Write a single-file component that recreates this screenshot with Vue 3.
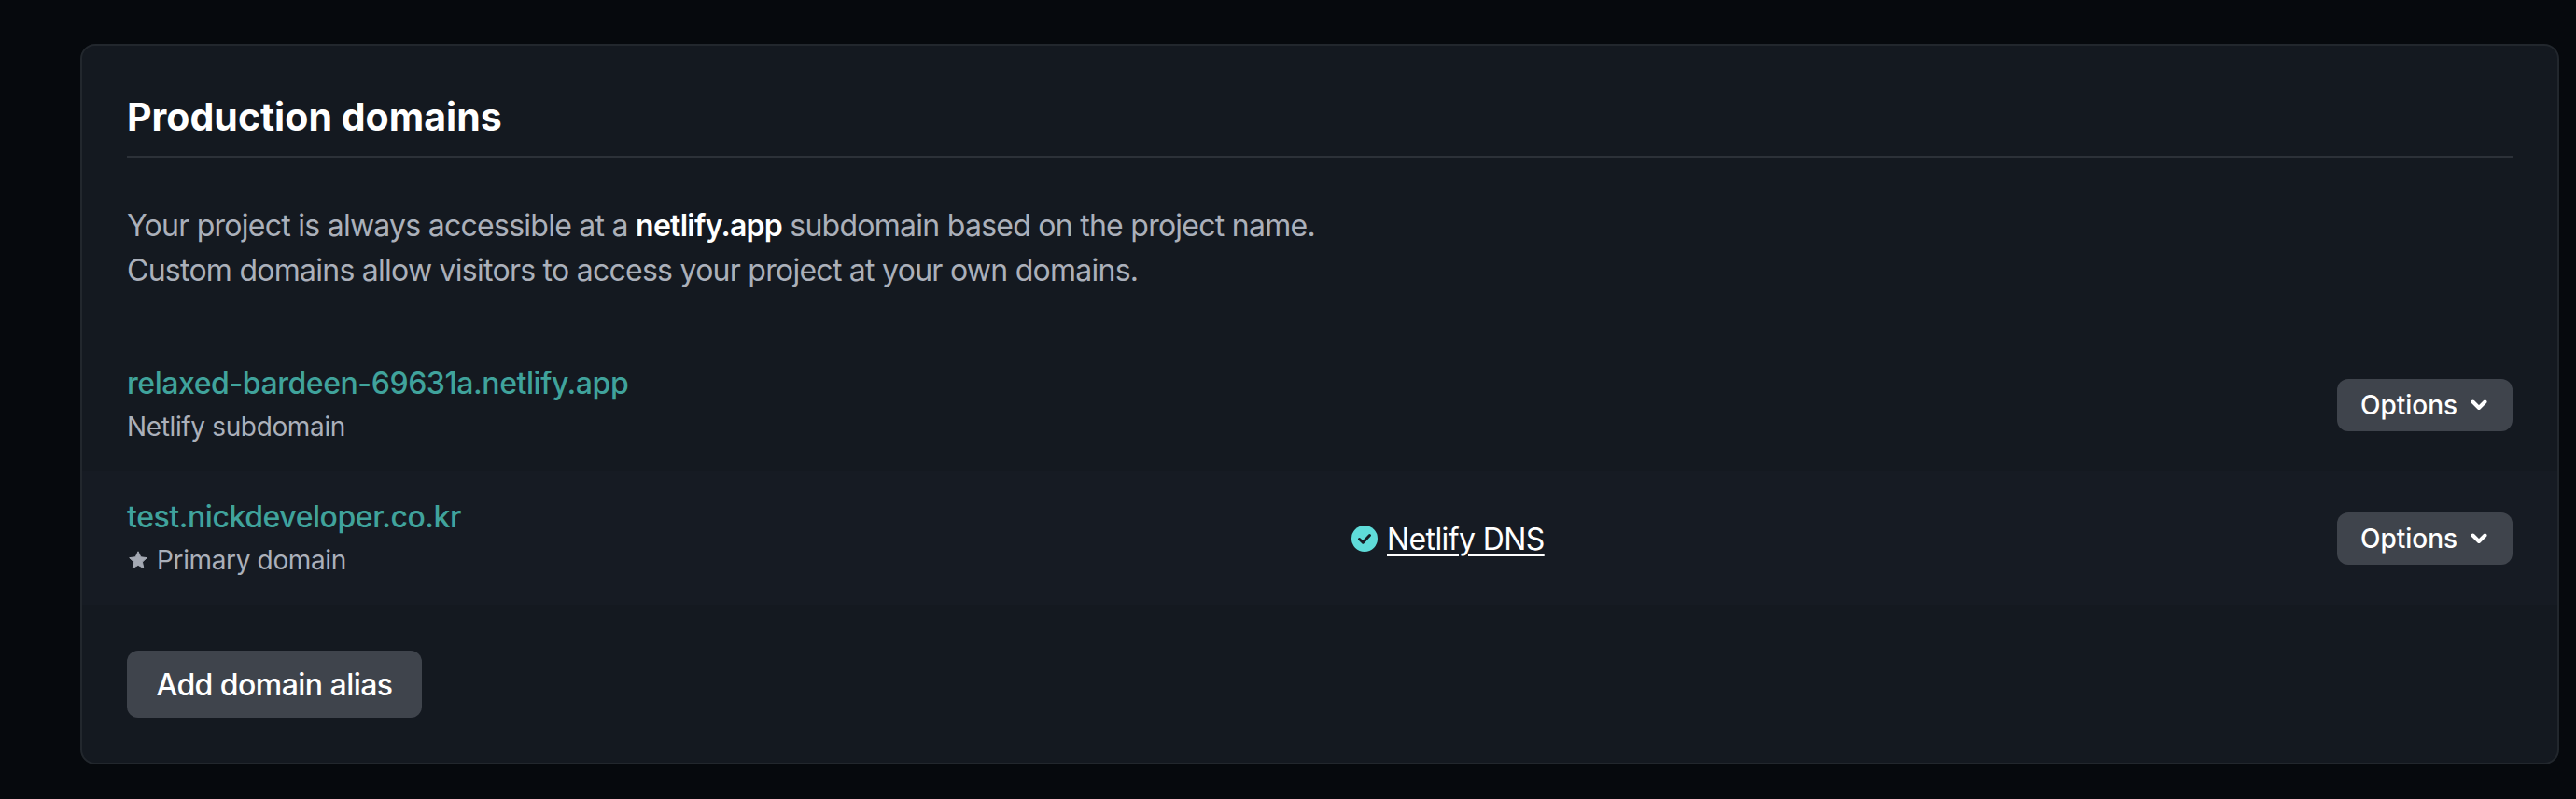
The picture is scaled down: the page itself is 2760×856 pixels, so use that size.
<template>
  <div class="page">
    <section class="card">
      <header class="card-header">
        <h2>Production domains</h2>
      </header>

      <p class="intro">
        Your project is always accessible at a <strong>netlify.app</strong> subdomain based on the project name.<br />
        Custom domains allow visitors to access your project at your own domains.
      </p>

      <ul class="domains">
        <li v-for="domain in domains" :key="domain.name" class="domain" :class="{ primary: domain.primary }">
          <div class="domain-name">
            <a class="domain-link" href="#">{{ domain.name }}</a>
            <div class="domain-note">
              <svg v-if="domain.primary" class="star" viewBox="0 0 20 20" aria-hidden="true">
                <path
                  d="M10 .8l2.8 6 6.5.8-4.8 4.5 1.3 6.5L10 15.4l-5.8 3.2 1.3-6.5L.7 7.600l6.500-.8z"
                  fill="currentColor"
                  stroke="currentColor"
                  stroke-width="1"
                  stroke-linejoin="round"
                />
              </svg>
              {{ domain.note }}
            </div>
          </div>

          <div class="domain-dns">
            <template v-if="domain.dns">
              <svg class="check" viewBox="0 0 28 28" aria-hidden="true">
                <circle cx="14" cy="14" r="14" fill="#5fdcd9" />
                <path d="M8.500 14.500l3.800 3.600 7.200-7.600" fill="none" stroke="#181d25" stroke-width="3" stroke-linecap="round" stroke-linejoin="round" />
              </svg>
              <a class="dns-link" href="#">{{ domain.dns }}</a>
            </template>
          </div>

          <button type="button" class="btn btn-options">
            Options
            <svg class="chevron" viewBox="0 0 18 12" aria-hidden="true">
              <path d="M2.500 2.500L9 9l6.500-6.500" fill="none" stroke="currentColor" stroke-width="4" stroke-linecap="round" stroke-linejoin="round" />
            </svg>
          </button>
        </li>
      </ul>

      <div class="card-actions">
        <button type="button" class="btn btn-add">Add domain alias</button>
      </div>
    </section>
  </div>
</template>

<script setup>
const domains = [
  { name: "relaxed-bardeen-69631a.netlify.app", note: "Netlify subdomain" },
  { name: "test.nickdeveloper.co.kr", note: "Primary domain", primary: true, dns: "Netlify DNS" },
];
</script>

<style>
html,
body {
  margin: 0;
  background: #06090d;
}
</style>

<style scoped>
.page {
  box-sizing: border-box;
  height: 856px;
  padding: 47px 18px 0 86px;
  background: #06090d;
  font-family: Inter, "Liberation Sans", sans-serif;
  overflow: hidden;
}

.card {
  box-sizing: border-box;
  height: 772px;
  background: #141920;
  border: 2px solid #22272d;
  border-radius: 16px;
}

.card-header {
  margin: 0 48px;
  padding: 52px 0 18px;
  border-bottom: 2px solid #2c3138;
}

.card-header h2 {
  margin: 0;
  font-size: 41px;
  line-height: 48px;
  font-weight: 700;
  color: #ffffff;
  letter-spacing: 0.03px;
}

.intro {
  margin: 49px 48px 48px;
  font-size: 32px;
  line-height: 48px;
  color: #abb0ba;
  letter-spacing: -0.74px;
}

.intro strong {
  font-weight: 600;
  color: #ffffff;
}

.domains {
  margin: 0;
  padding: 0;
  list-style: none;
}

.domain {
  display: grid;
  grid-template-columns: 1312px 1fr auto;
  align-items: center;
  height: 143px;
  box-sizing: border-box;
  padding: 0 48px;
}

.domain.primary {
  background: #161b23;
}

.domain-link {
  display: block;
  margin-top: -1px;
  font-size: 32px;
  line-height: 47px;
  font-weight: 500;
  color: #40a39c;
  text-decoration: none;
  letter-spacing: -0.44px;
}

.domain-note {
  display: flex;
  align-items: center;
  gap: 10px;
  font-size: 28px;
  line-height: 46px;
  color: #abb0ba;
  letter-spacing: -0.36px;
}

.star {
  width: 20px;
  height: 20px;
  margin-left: 2px;
  color: #a4a9b3;
}

.domain-dns {
  display: flex;
  align-items: center;
  gap: 10px;
}

.check {
  width: 28px;
  height: 28px;
}

.dns-link {
  padding-top: 2px;
  font-size: 32px;
  line-height: 48px;
  color: #ffffff;
  text-decoration: underline;
  text-underline-offset: 5px;
  text-decoration-thickness: 2px;
  letter-spacing: -0.6px;
}

.btn {
  border: none;
  background: #3f444c;
  color: #ffffff;
  font-family: inherit;
  font-weight: 500;
  border-radius: 12px;
}

.btn-options {
  display: flex;
  align-items: center;
  gap: 14px;
  width: 188px;
  height: 56px;
  padding: 0 26px 0 25px;
  font-size: 28px;
}

.chevron {
  width: 18px;
  height: 12px;
}

.card-actions {
  padding: 49px 48px 0;
}

.btn-add {
  display: block;
  width: 316px;
  height: 72px;
  padding: 0;
  font-size: 32px;
  letter-spacing: -0.55px;
}
</style>
